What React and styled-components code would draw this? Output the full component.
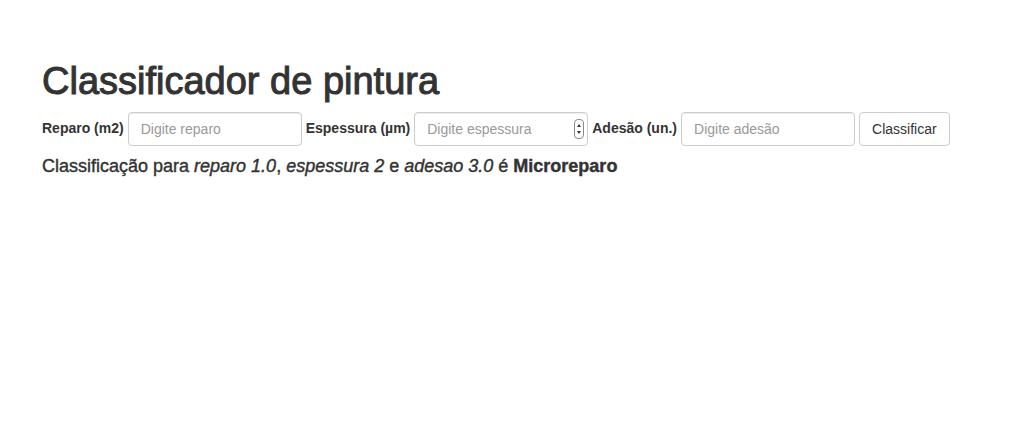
import React from "react";
import styled, { createGlobalStyle } from "styled-components";

const GlobalStyles = createGlobalStyle`
  body {
    margin: 0;
    background: #fff;
    color: #333;
    font-family: "Liberation Sans", Arial, sans-serif;
    font-size: 14px;
    line-height: 1.42857;
  }
`;

const Container = styled.div`
  padding: 0 42px;
`;

const Title = styled.h1`
  font-size: 38px;
  font-weight: 500;
  line-height: 1.1;
  margin: 61px 0 9px;
  color: #333;
  -webkit-text-stroke: 1px #333;
`;

const Form = styled.form`
  display: flex;
  align-items: center;
  gap: 4px;
  margin-top: 8px;
`;

const Label = styled.label`
  font-weight: bold;
  font-size: 14px;
`;

const Field = styled.div`
  position: relative;
`;

const Input = styled.input`
  box-sizing: border-box;
  width: 174px;
  height: 34px;
  padding: 6px 12px;
  font-family: inherit;
  font-size: 14px;
  color: #555;
  border: 1px solid #ccc;
  border-radius: 4px;
  box-shadow: inset 0 1px 1px rgba(0, 0, 0, 0.075);
  &::placeholder {
    color: #999;
  }
`;

const Spinner = styled.span`
  position: absolute;
  right: 4px;
  top: 7px;
  width: 10px;
  height: 20px;
`;

const Button = styled.button`
  box-sizing: border-box;
  height: 34px;
  padding: 6px 12px;
  font-family: inherit;
  font-size: 14px;
  color: #333;
  background: #fff;
  border: 1px solid #ccc;
  border-radius: 4px;
`;

const Result = styled.h4`
  font-size: 18px;
  font-weight: 500;
  line-height: 1.1;
  margin: 11px 0 0;
  -webkit-text-stroke: 0.4px #333;
  i {
    font-style: italic;
  }
  b {
    font-weight: bold;
  }
`;

function SpinIcon() {
  return (
    <Spinner>
      <svg width="10" height="20" viewBox="0 0 10 20">
        <rect x="0.5" y="0.5" width="9" height="19" rx="3.5" fill="#fff" stroke="#8a8a8a" />
        <path d="M3 8 L5 5 L7 8 Z" fill="#333" />
        <path d="M3 12 L5 15 L7 12 Z" fill="#333" />
      </svg>
    </Spinner>
  );
}

export default function App() {
  return (
    <>
      <GlobalStyles />
      <Container>
        <Title>Classificador de pintura</Title>
        <Form onSubmit={(e) => e.preventDefault()}>
          <Label>Reparo (m2)</Label>
          <Field>
            <Input placeholder="Digite reparo" />
          </Field>
          <Label>Espessura (µm)</Label>
          <Field>
            <Input placeholder="Digite espessura" />
            <SpinIcon />
          </Field>
          <Label>Adesão (un.)</Label>
          <Field>
            <Input placeholder="Digite adesão" />
          </Field>
          <Button type="submit">Classificar</Button>
        </Form>
        <Result>
          Classificação para <i>reparo 1.0</i>, <i>espessura 2</i> e{" "}
          <i>adesao 3.0</i> é <b>Microreparo</b>
        </Result>
      </Container>
    </>
  );
}
